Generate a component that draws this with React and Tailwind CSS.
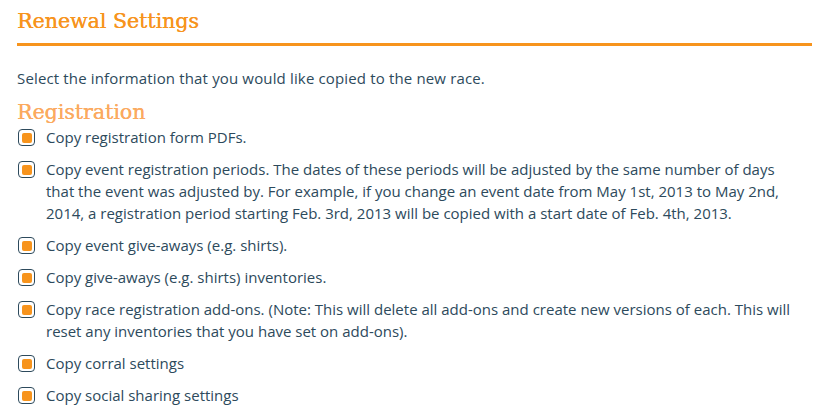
import React, { useState } from 'react';

const OPTIONS = [
	'Copy registration form PDFs.',
	'Copy event registration periods. The dates of these periods will be adjusted by the same number of days that the event was adjusted by. For example, if you change an event date from May 1st, 2013 to May 2nd, 2014, a registration period starting Feb. 3rd, 2013 will be copied with a start date of Feb. 4th, 2013.',
	'Copy event give-aways (e.g. shirts).',
	'Copy give-aways (e.g. shirts) inventories.',
	'Copy race registration add-ons. (Note: This will delete all add-ons and create new versions of each. This will reset any inventories that you have set on add-ons).',
	'Copy corral settings',
	'Copy social sharing settings',
];

function OrangeCheck({ checked, onChange }) {
	return (
		<button
			type="button"
			onClick={onChange}
			className="mt-[3px] flex h-[17px] w-[17px] shrink-0 items-center justify-center rounded-[4px] border-[1.5px] border-[#2d4a5c] bg-white">
			{checked && <span className="block h-[10px] w-[10px] rounded-[2px] bg-[#f7941d]" />}
		</button>
	);
}

export default function App() {
	const [checked, setChecked] = useState(OPTIONS.map(() => true));

	const toggle = (i) =>
		setChecked((prev) => prev.map((c, j) => (j === i ? !c : c)));

	return (
		<div className="min-h-screen bg-white px-[17px] pt-[8px] font-['Open_Sans',sans-serif] text-[15px] text-[#2d4a5c]">
			<h1 className="border-b-[3px] border-[#f7941d] pb-[8px] font-['DejaVu_Serif',serif] text-[20.5px] leading-[27px] text-[#f7941d] [text-shadow:0.4px_0_0_#f7941d]">
				Renewal Settings
			</h1>

			<p className="mt-[21px] leading-[22px] tracking-[0.15px]">
				Select the information that you would like copied to the new race.
			</p>

			<h2 className="mt-[10px] font-['DejaVu_Serif',serif] text-[20.5px] leading-[27px] text-[#fbaa5f] [text-shadow:0.3px_0_0_#fbaa5f]">
				Registration
			</h2>

			<div className="flex w-[780px] flex-col gap-[10px]">
				{OPTIONS.map((label, i) => (
					<label key={i} className="flex cursor-pointer items-start gap-[11px] pl-[1px]">
						<OrangeCheck checked={checked[i]} onChange={() => toggle(i)} />
						<span className="block min-w-0 flex-1 leading-[22px]">{label}</span>
					</label>
				))}
			</div>
		</div>
	);
}
